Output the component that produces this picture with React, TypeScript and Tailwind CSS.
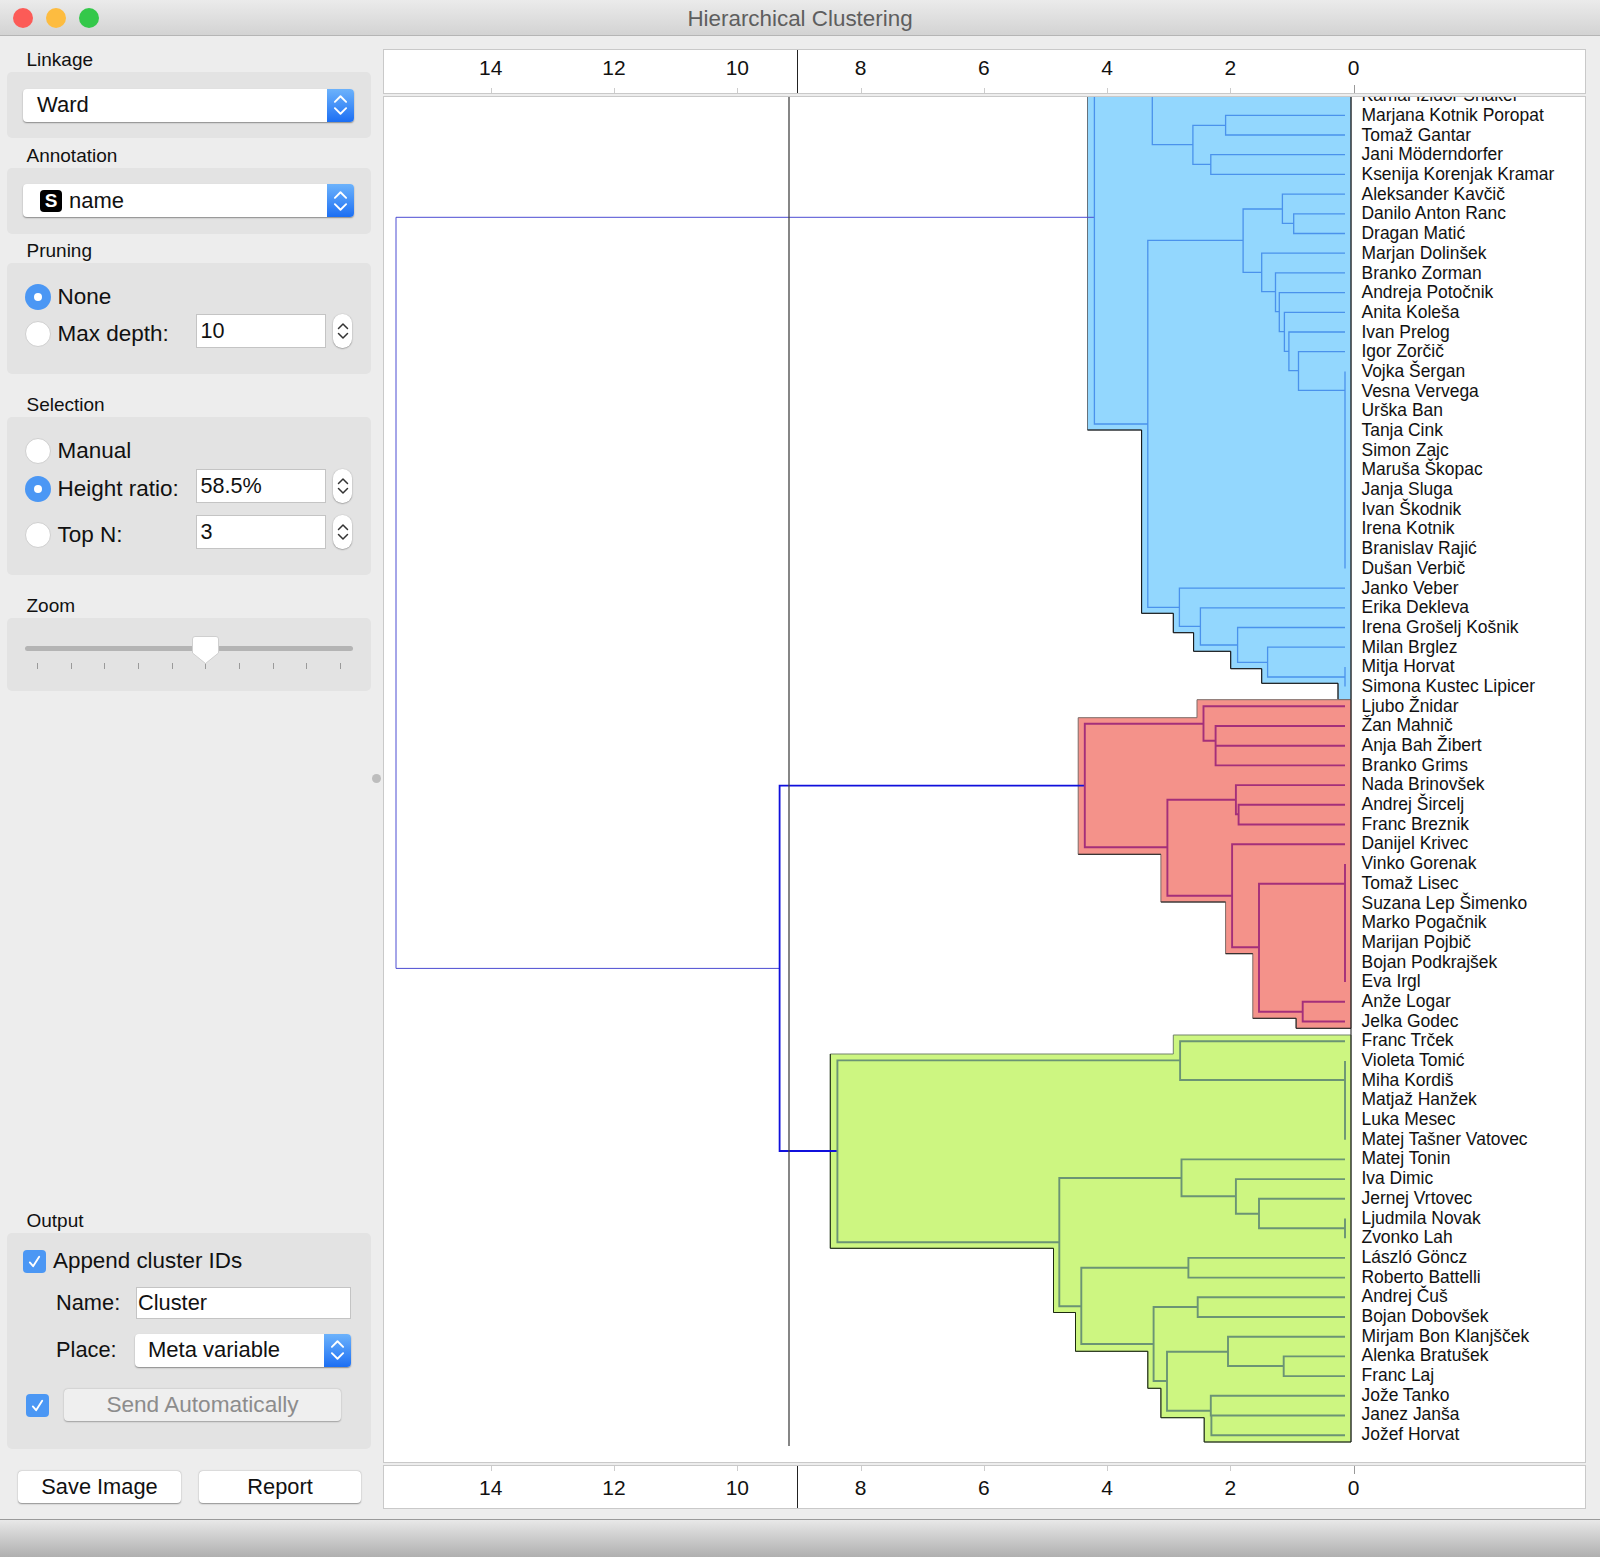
const font = { fontFamily: '"Liberation Sans", Arial, sans-serif' };

const NAMES = [
  "Kamal Izidor Shaker", "Marjana Kotnik Poropat", "Tomaž Gantar", "Jani Möderndorfer", "Ksenija Korenjak Kramar",
  "Aleksander Kavčič", "Danilo Anton Ranc", "Dragan Matić", "Marjan Dolinšek", "Branko Zorman", "Andreja Potočnik",
  "Anita Koleša", "Ivan Prelog", "Igor Zorčič", "Vojka Šergan", "Vesna Vervega", "Urška Ban", "Tanja Cink", "Simon Zajc",
  "Maruša Škopac", "Janja Sluga", "Ivan Škodnik", "Irena Kotnik", "Branislav Rajić", "Dušan Verbič", "Janko Veber",
  "Erika Dekleva", "Irena Grošelj Košnik", "Milan Brglez", "Mitja Horvat", "Simona Kustec Lipicer", "Ljubo Žnidar",
  "Žan Mahnič", "Anja Bah Žibert", "Branko Grims", "Nada Brinovšek", "Andrej Šircelj", "Franc Breznik", "Danijel Krivec",
  "Vinko Gorenak", "Tomaž Lisec", "Suzana Lep Šimenko", "Marko Pogačnik", "Marijan Pojbič", "Bojan Podkrajšek", "Eva Irgl",
  "Anže Logar", "Jelka Godec", "Franc Trček", "Violeta Tomić", "Miha Kordiš", "Matjaž Hanžek", "Luka Mesec",
  "Matej Tašner Vatovec", "Matej Tonin", "Iva Dimic", "Jernej Vrtovec", "Ljudmila Novak", "Zvonko Lah", "László Göncz",
  "Roberto Battelli", "Andrej Čuš", "Bojan Dobovšek", "Mirjam Bon Klanjšček", "Alenka Bratušek", "Franc Laj", "Jože Tanko",
  "Janez Janša", "Jožef Horvat",
];

// Dendrogram coordinates are page pixels; the svg viewBox starts at the plot's corner
const R = (i: number) => 115.3 + 19.7 * (i - 1);
const L = 1345;

// x of the vertical, y top, y bottom, x where the top arm ends, x where the bottom arm ends
type Bracket = [number, number, number, number, number];

const BLUE: Bracket[] = [
  [1094.4, 60, 424, 1152, 1147.8],
  [1147.8, 240.3, 607.3, 1243.1, 1179.4],
  [1152.3, R(0), 144.7, L, 1192.9],
  [1192.9, 125.3, 164.3, 1225.6, 1210.8],
  [1225.6, R(1), R(2), L, L],
  [1210.8, R(3), R(4), L, L],
  [1243.1, 209, 272.3, 1282.4, 1261.7],
  [1282.4, R(5), 223.3, L, 1293.7],
  [1293.7, R(6), R(7), L, L],
  [1261.7, R(8), 291.7, L, 1275.5],
  [1275.5, R(9), 311.7, L, 1279.3],
  [1279.3, R(10), 331.7, L, 1284.4],
  [1284.4, R(11), 351.3, L, 1288.9],
  [1288.9, R(12), 370.7, L, 1298.5],
  [1298.5, R(13), 390.3, L, L],
  [L, R(14), R(24), L, L],
  [1179.4, R(25), 626.3, L, 1200.4],
  [1200.4, R(26), 645, L, 1237.6],
  [1237.6, R(27), 662.3, L, 1267.6],
  [1267.6, R(28), 677, L, L],
  [L, R(29), R(30), L, L],
];

const RED: Bracket[] = [
  [1084.8, 723.7, 847.3, 1203.5, 1167.4],
  [1203.5, R(31), 740.7, L, 1215.6],
  [1215.6, R(32), R(34), L, L],
  [1215.6, R(33), R(33), L, 1215.6],
  [1167.4, 799.7, 895.7, 1235.9, 1232.1],
  [1235.9, R(35), 814.3, L, 1238.6],
  [1238.6, R(36), R(37), L, L],
  [1232.1, R(38), 947.3, L, 1259],
  [1259, 883.7, 1011.7, L, 1302.7],
  [L, R(39), R(45), L, L],
  [1302.7, R(46), R(47), L, L],
];

const GREEN: Bracket[] = [
  [837.4, 1060.4, 1242.3, 1180.1, 1059.3],
  [1180.1, R(48), 1080, L, L],
  [L, R(49), R(53), L, L],
  [1059.3, 1178, 1306.3, 1181.5, 1081.3],
  [1181.5, R(54), 1196.3, L, 1235.9],
  [1235.9, R(55), 1213.7, L, 1259],
  [1259, R(56), 1228.3, L, L],
  [L, R(57), R(58), L, L],
  [1081.3, 1267.7, 1344, 1188.4, 1153.6],
  [1188.4, R(59), R(60), L, L],
  [1153.6, 1307, 1381, 1197.7, 1167],
  [1197.7, R(61), R(62), L, L],
  [1167, 1351.7, 1410.7, 1228, 1210.8],
  [1228, R(63), 1366, L, 1283.7],
  [1283.7, R(64), R(65), L, L],
  [1210.8, R(66), R(67), L, L],
  [1211.4, R(67), R(68), L, L],
];

const toPath = (list: Bracket[]) =>
  list.map(([x, y1, y2, a, b]) => `M${a} ${y1}H${x}V${y2}H${b}`).join("");

function Dendrogram() {
  return (
    <svg
      className="absolute left-0 top-0 h-[1365px] w-[1201px]"
      viewBox="384 97 1201 1365"
      fill="none"
      aria-hidden
    >
      {/* cluster fills */}
      <path
        d="M1087.5 60V430H1141.6V613.3H1173.3V632.7H1193.6V651.3H1230.7V668.7H1261.7V683.3H1338V699.5H1351V60Z"
        fill="#93d7fe"
        stroke="#66727c"
      />
      <path d="M1087.5 430H1141.6V613.3H1173.3V632.7H1193.6V651.3H1230.7V668.7H1261.7V683.3H1338V699.5" stroke="#111" />
      <path
        d="M1351 699.7H1197V717.7H1078.2V854.3H1160.9V902H1225.6V953.7H1252.8V1018.3H1296.1V1028.3H1351Z"
        fill="#f4928a"
        stroke="#7d6a66"
      />
      <path d="M1078.2 854.3H1160.9M1225.6 902H1160.9M1225.6 953.7H1252.8M1252.8 1018.3H1296.1V1028.3H1351" stroke="#222" />
      <path
        d="M1351 1035H1173.3V1054H830.3V1248.3H1053.5V1312.5H1075.5V1351.3H1147.8V1388.3H1160.9V1417.7H1204.2V1442H1351Z"
        fill="#cdf681"
        stroke="#72836a"
      />
      <path d="M830.3 1054V1248.3H1053.5V1312.5H1075.5V1351.3H1147.8V1388.3H1160.9V1417.7H1204.2V1442H1351" stroke="#1c2a10" />
      <path d="M1351 60V1442" stroke="#111" />

      {/* top of the tree */}
      <path d="M1094.4 217.3H396V968.4H779.6" stroke="#4c4cd2" />
      <path d="M1084.8 785.7H779.6V1151H837.4" stroke="#1010dc" strokeWidth={1.8} />

      {/* cluster branches */}
      <path d={toPath(BLUE)} stroke="#4a92ec" strokeWidth={1.3} />
      <path d={toPath(RED)} stroke="#a42f7a" strokeWidth={1.9} />
      <path d={toPath(GREEN)} stroke="#6b9474" strokeWidth={1.9} />

      {/* cut line */}
      <path d="M789 97V1446" stroke="#444" strokeWidth={1.3} />
    </svg>
  );
}

function Axis({ bottom }: { bottom?: boolean }) {
  const ticks = [14, 12, 10, 8, 6, 4, 2, 0];
  return (
    <div
      className={`relative w-[1203px] shrink-0 overflow-hidden border border-[#c9c9c9] bg-white ${
        bottom ? "h-[44px]" : "h-[45px]"
      }`}
    >
      {ticks.map((t, i) => {
        const left = 490.8 + 123.26 * i - 384;
        return (
          <div key={t} className="absolute top-0 h-full" style={{ left }}>
            <span
              className={`absolute -translate-x-1/2 text-[21px] leading-[24px] text-[#111] ${
                bottom ? "top-[10px]" : "top-[6px]"
              }`}
            >
              {t}
            </span>
            <span
              className={`absolute w-px ${t === 0 ? "h-[8px] bg-[#999]" : "h-[5px] bg-[#ccc]"} ${
                bottom ? "top-0" : "bottom-0"
              }`}
            />
          </div>
        );
      })}
      {/* selection marker */}
      <div className="absolute bottom-0 left-[413px] top-0 w-px bg-[#222]" />
    </div>
  );
}

function Section({ title, className, children }: { title: string; className: string; children?: React.ReactNode }) {
  return (
    <div className={className}>
      <div className="h-[24px] pl-[19.5px] text-[19px] leading-[24px] text-[#111]">{title}</div>
      {children}
    </div>
  );
}

function UpDown({ className, stroke }: { className: string; stroke: string }) {
  return (
    <svg className={className} viewBox="0 0 12 20" fill="none" stroke={stroke} strokeWidth={1.5} strokeLinecap="round" strokeLinejoin="round" aria-hidden>
      <path d="M1.500 7.500 6 3l4.500 4.500M1.500 12.500 6 17l4.500-4.500" />
    </svg>
  );
}

function Combo({ className, children }: { className: string; children: React.ReactNode }) {
  return (
    <div className={`flex h-[33px] items-center rounded-[4px] bg-white shadow-[0_1px_1.5px_rgba(0,0,0,0.4)] ${className}`}>
      <div className="flex flex-1 items-center text-[22px] leading-none text-[#111]">{children}</div>
      <div className="flex h-full w-[27px] items-center justify-center rounded-r-[4px] bg-gradient-to-b from-[#6cb2fb] to-[#1b6ef3]">
        <UpDown className="h-[26px] w-[15px]" stroke="#fff" />
      </div>
    </div>
  );
}

function Radio({ on }: { on?: boolean }) {
  return (
    <span
      className={`flex h-[26px] w-[26px] shrink-0 items-center justify-center rounded-full ${
        on ? "bg-[#4b97f4]" : "border border-[#cfcfcf] bg-white"
      }`}
    >
      {on && <span className="h-[8px] w-[8px] rounded-full bg-white" />}
    </span>
  );
}

function SpinRow({ label, value, on, className }: { label: string; value: string; on?: boolean; className?: string }) {
  return (
    <div className={`flex h-[34px] items-center pl-[18px] ${className ?? ""}`}>
      <div className="mt-[6px] flex w-[171px] items-center gap-[6.500px] text-[22.500px] leading-none text-[#111]">
        <Radio on={on} />
        {label}
      </div>
      <div className="flex h-[34px] w-[130px] items-center border border-[#c4c4c4] bg-white pl-[3.500px] text-[21.600px] text-[#111]">
        {value}
      </div>
      <div className="ml-[7px] flex h-[34px] w-[19px] items-center justify-center rounded-[9px] bg-white shadow-[0_0.5px_1.5px_rgba(0,0,0,0.45)]">
        <UpDown className="h-[24px] w-[12px]" stroke="#333" />
      </div>
    </div>
  );
}

function Check({ className }: { className: string }) {
  return (
    <span className={`flex h-[23px] w-[23px] shrink-0 items-center justify-center rounded-[4px] bg-[#4b97f4] ${className}`}>
      <svg className="h-[15px] w-[15px]" viewBox="0 0 16 16" fill="none" stroke="#fff" strokeWidth={2} strokeLinecap="round" strokeLinejoin="round" aria-hidden>
        <path d="M3 9l3.500 4L13 3" />
      </svg>
    </span>
  );
}

function Sidebar() {
  return (
    <div className="relative flex h-full w-[383px] shrink-0 flex-col pb-[16px] pl-[7px] pt-[12px]">
      <Section title="Linkage" className="w-[364px]">
        <div className="h-[66px] rounded-[5px] bg-[#e3e3e3] px-[16px] pt-[16.500px]">
          <Combo className="w-[331px]">
            <span className="pl-[14px]">Ward</span>
          </Combo>
        </div>
      </Section>
      <Section title="Annotation" className="mt-[5.500px] w-[364px]">
        <div className="h-[66px] rounded-[5px] bg-[#e3e3e3] px-[16px] pt-[16.500px]">
          <Combo className="w-[331px]">
            <span className="ml-[17px] flex h-[22px] w-[22px] items-center justify-center rounded-[4px] bg-black text-[19px] font-bold text-white">
              S
            </span>
            <span className="pl-[7px]">name</span>
          </Combo>
        </div>
      </Section>
      <Section title="Pruning" className="mt-[5.500px] w-[364px]">
        <div className="h-[111px] rounded-[5px] bg-[#e3e3e3] pt-[21px]">
          <div className="flex items-center gap-[6.500px] pl-[18px] text-[22.500px] leading-none text-[#111]">
            <Radio on />
            None
          </div>
          <SpinRow label="Max depth:" value="10" className="mt-[4px]" />
        </div>
      </Section>
      <Section title="Selection" className="mt-[19px] w-[364px]">
        <div className="h-[158px] rounded-[5px] bg-[#e3e3e3] pt-[21px]">
          <div className="flex items-center gap-[6.500px] pl-[18px] text-[22.500px] leading-none text-[#111]">
            <Radio />
            Manual
          </div>
          <SpinRow label="Height ratio:" value="58.5%" on className="mt-[5px]" />
          <SpinRow label="Top N:" value="3" className="mt-[12px]" />
        </div>
      </Section>
      <Section title="Zoom" className="mt-[18.500px] w-[364px]">
        <div className="relative h-[73px] rounded-[5px] bg-[#e3e3e3] px-[18px] pt-[28px]">
          <div className="h-[5px] w-[328px] rounded-full bg-[#b4b4b4]" />
          <div className="mt-[12px] flex w-[328px] justify-between pl-[12px] pr-[12px]">
            {[0, 1, 2, 3, 4, 5, 6, 7, 8, 9].map((i) => (
              <span key={i} className="h-[6px] w-px bg-[#9a9a9a]" />
            ))}
          </div>
          <svg className="absolute left-[185px] top-[18px] h-[28px] w-[27px]" viewBox="0 0 27 28" aria-hidden>
            <path d="M3 .5H24a2.500 2.500 0 0 1 2.500 2.500V17L13.500 27.500.5 17V3A2.500 2.500 0 0 1 3 .5Z" fill="#fff" stroke="#cfcfcf" />
          </svg>
        </div>
      </Section>

      <div className="flex-1" />

      <Section title="Output" className="w-[364px]">
        <div className="h-[216px] rounded-[5px] bg-[#e3e3e3] pt-[17px]">
          <div className="flex items-center gap-[7px] pl-[16px] text-[22.400px] leading-none text-[#111]">
            <Check className="" />
            Append cluster IDs
          </div>
          <div className="mt-[14px] flex h-[32px] items-center pl-[49px] text-[21.800px] leading-none text-[#111]">
            <span className="w-[80px]">Name:</span>
            <div className="flex h-[32px] w-[215px] items-center border border-[#c4c4c4] bg-white pl-[1px]">Cluster</div>
          </div>
          <div className="mt-[15px] flex h-[32px] items-center pl-[49px] text-[21.800px] leading-none text-[#111]">
            <span className="w-[79px]">Place:</span>
            <Combo className="w-[216px]">
              <span className="pl-[13px]">Meta variable</span>
            </Combo>
          </div>
          <div className="mt-[23px] flex items-center pl-[19px]">
            <Check className="" />
            <div className="ml-[15px] flex h-[32px] w-[277px] items-center justify-center rounded-[4px] bg-[#efefef] text-[22.600px] leading-none text-[#8c8c8c] shadow-[0_0.5px_1.5px_rgba(0,0,0,0.3)]">
              Send Automatically
            </div>
          </div>
        </div>
      </Section>

      <div className="mt-[22px] flex gap-[18px] pl-[11px]">
        <div className="flex h-[32px] w-[163px] items-center justify-center rounded-[4px] bg-white text-[21.800px] leading-none text-[#111] shadow-[0_0.5px_1.5px_rgba(0,0,0,0.4)]">
          Save Image
        </div>
        <div className="flex h-[32px] w-[162px] items-center justify-center rounded-[4px] bg-white text-[21.800px] leading-none text-[#111] shadow-[0_0.5px_1.5px_rgba(0,0,0,0.4)]">
          Report
        </div>
      </div>

      {/* splitter handle */}
      <span className="absolute left-[372px] top-[738px] h-[9px] w-[9px] rounded-full bg-[#bdbdbd]" />
    </div>
  );
}

export default function App() {
  return (
    <div className="flex h-[1557px] w-[1600px] flex-col overflow-hidden bg-[#ededed]" style={font}>
      {/* title bar */}
      <div className="relative flex h-[36px] shrink-0 items-center justify-center border-b border-[#b5b5b5] bg-gradient-to-b from-[#ebebeb] to-[#d3d3d3] pt-[2px] text-[22.400px] text-[#5e5e5e]">
        <div className="absolute left-[13px] top-[8px] flex gap-[13px]">
          <span className="h-[20px] w-[20px] rounded-full bg-[#fc5b57]" />
          <span className="h-[20px] w-[20px] rounded-full bg-[#fdbc40]" />
          <span className="h-[20px] w-[20px] rounded-full bg-[#34c84a]" />
        </div>
        Hierarchical Clustering
      </div>

      <div className="flex min-h-0 flex-1">
        <Sidebar />
        <div className="flex flex-col pt-[13px]">
          <Axis />
          <div className="relative mt-[2px] h-[1367px] w-[1203px] shrink-0 overflow-hidden border border-[#c9c9c9] bg-white">
            <Dendrogram />
            <div className="relative -mt-[10.75px] pl-[977.5px]">
              {NAMES.map((name) => (
                <div key={name} className="flex h-[19.7px] items-center whitespace-nowrap text-[17.45px] leading-none text-[#111]">
                  {name}
                </div>
              ))}
            </div>
          </div>
          <div className="mt-[2px]">
            <Axis bottom />
          </div>
        </div>
      </div>

      {/* status bar */}
      <div className="h-[38px] shrink-0 border-t border-[#9a9a9a] bg-gradient-to-b from-[#e8e8e8] to-[#b0b0b0]" />
    </div>
  );
}
